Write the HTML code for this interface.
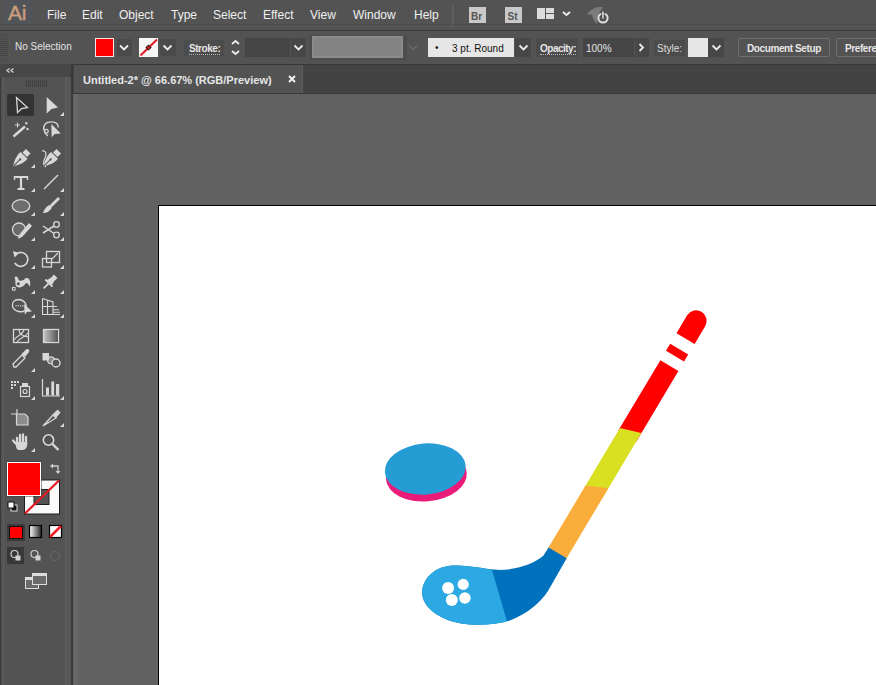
<!DOCTYPE html>
<html><head><meta charset="utf-8">
<style>
*{margin:0;padding:0;box-sizing:border-box}
html,body{width:876px;height:685px;overflow:hidden;background:#616161;font-family:"Liberation Sans",sans-serif;}
.a{position:absolute}
#menubar{left:0;top:0;width:876px;height:31px;background:#535353;border-bottom:1px solid #3a3a3a}
.mi{position:absolute;top:8px;font-size:12px;color:#f0f0f0;white-space:nowrap}
#ctrl{left:0;top:31px;width:876px;height:33px;background:#535353;}
.ct{position:absolute;font-size:10px;color:#e6e6e6;white-space:nowrap}
#tabbar{left:73px;top:64px;width:803px;height:30px;background:#434343;border-top:1px solid #383838;border-bottom:1px solid #393939}
#tab{left:74px;top:65px;width:229px;height:28px;background:#535353;border-right:1px solid #5c5c5c}
#tools{left:0;top:64px;width:72px;height:621px;background:#535353;}
#canvas{left:74px;top:94px;width:802px;height:591px;background:#616161}
#artboard{left:158px;top:205px;width:718px;height:480px;background:#fff;border-left:1px solid #000;border-top:1px solid #000}
svg{position:absolute;left:0;top:0}
</style></head><body>
<div id="menubar" class="a">
 <div class="a" style="left:5px;top:0;width:27px;height:24px;background:#51555a"></div>
 <div class="a" style="left:8px;top:1px;font-size:21px;color:#cc9e7c;letter-spacing:-0.3px;-webkit-text-stroke:0.4px #cc9e7c">Ai</div>
 <div class="a" style="left:0;top:24px;width:876px;height:1px;background:#4b4b4b"></div>
 <div class="a" style="left:0;top:26px;width:876px;height:1px;background:#5a5a5a"></div>
 <div class="mi" style="left:47px">File</div>
 <div class="mi" style="left:82px">Edit</div>
 <div class="mi" style="left:119px">Object</div>
 <div class="mi" style="left:171px">Type</div>
 <div class="mi" style="left:213px">Select</div>
 <div class="mi" style="left:263px">Effect</div>
 <div class="mi" style="left:310px">View</div>
 <div class="mi" style="left:353px">Window</div>
 <div class="mi" style="left:414px">Help</div>
</div>
<div id="ctrl" class="a"></div>
<div id="tools" class="a"></div>
<div id="tabbar" class="a"></div>
<div id="tab" class="a"></div>
<div id="canvas" class="a"></div>
<div id="artboard" class="a"></div>


<svg width="876" height="685" viewBox="0 0 876 685" style="left:0;top:0">
 <!-- toolbar frame -->
 <rect x="0" y="64" width="72" height="621" fill="#535353"/>
 <rect x="0" y="64" width="1" height="621" fill="#3a3a3a"/>
 <rect x="3" y="77" width="1" height="608" fill="#5c5c5c"/>
 <rect x="65" y="77" width="2" height="608" fill="#5c5c5c"/>
 <rect x="67" y="77" width="4" height="608" fill="#565656"/>
 <rect x="71" y="64" width="2" height="621" fill="#383838"/>
 <rect x="73" y="94" width="5" height="591" fill="#676767"/>
 <rect x="0" y="64" width="71" height="13" fill="#474747"/>
 <path d="M9.5 68.5 L7 70.5 L9.5 72.5 M13.5 68.5 L11 70.5 L13.5 72.5" fill="none" stroke="#cfcfcf" stroke-width="1.4"/>
 <g fill="#3e3e3e">
  <rect x="26" y="80" width="1" height="7"/><rect x="28" y="80" width="1" height="7"/><rect x="30" y="80" width="1" height="7"/><rect x="32" y="80" width="1" height="7"/><rect x="34" y="80" width="1" height="7"/><rect x="36" y="80" width="1" height="7"/><rect x="38" y="80" width="1" height="7"/><rect x="40" y="80" width="1" height="7"/><rect x="42" y="80" width="1" height="7"/><rect x="44" y="80" width="1" height="7"/><rect x="46" y="80" width="1" height="7"/>
 </g>
 <rect x="7" y="94" width="27" height="22" rx="2" fill="#333"/>
 <g fill="#d8d8d8">
  <!-- group triangles -->
  <path d="M35 188 L35 192 L31 192 Z"/><path d="M64 188 L64 192 L60 192 Z"/>
  <path d="M64 112 L64 116 L60 116 Z"/>
  <path d="M35 164 L35 168 L31 168 Z"/>
  <path d="M35 212 L35 216 L31 216 Z"/><path d="M64 212 L64 216 L60 216 Z"/>
  <path d="M35 237 L35 241 L31 241 Z"/><path d="M64 237 L64 241 L60 241 Z"/>
  <path d="M35 265 L35 269 L31 269 Z"/><path d="M64 265 L64 269 L60 269 Z"/>
  <path d="M35 290 L35 294 L31 294 Z"/><path d="M64 290 L64 294 L60 294 Z"/>
  <path d="M35 314 L35 318 L31 318 Z"/><path d="M64 314 L64 318 L60 318 Z"/>
  <path d="M35 368 L35 372 L31 372 Z"/>
  <path d="M35 396 L35 400 L31 400 Z"/><path d="M64 396 L64 400 L60 400 Z"/>
  <path d="M64 423 L64 427 L60 427 Z"/>
  <path d="M35 448 L35 452 L31 452 Z"/>
 </g>
 <g fill="none" stroke="#d8d8d8" stroke-width="1.3" stroke-linejoin="miter">
  <!-- selection -->
  <path d="M16.5 97.5 L17.5 112.5 L21.6 108.5 L27.5 107.5 Z"/>
  <!-- magic wand -->
  <path d="M13.5 136.5 L25 126.5" stroke-width="2.4"/>
  <path d="M17.5 122.5 V127.5 M15 125 H20" stroke-width="1"/>
  <!-- lasso -->
  <path d="M43.5 129.5 C43.5 124 47 121.8 51 121.8 C55 121.8 58.3 123.5 58.3 127.5" stroke-width="1.3"/>
  <path d="M43.8 128.5 C44.5 131 45 134 47.8 136" stroke-width="1.3"/>
  <circle cx="46.3" cy="131.2" r="1.9" stroke-width="1.2"/>
  <!-- curvature pen curve -->
  <path d="M42 151 C46 150 47 154 45 158 C43 162 43 165 46 167" stroke-width="1.2"/>
  <!-- line -->
  <path d="M44 189 L58 175" stroke-width="1.5"/>
  <!-- type -->
  <path d="M14.5 177 H27.5 M21 177 V189 M17.5 189 H24.5" stroke-width="2.2"/><path d="M14.5 176 V180 M27.5 176 V180" stroke-width="1.4"/>
  <!-- ellipse -->
  <ellipse cx="21" cy="206" rx="8.8" ry="6.3" stroke-width="1.3" fill="#6e6e6e"/>
  <!-- shaper -->
  <circle cx="19" cy="229.5" r="6.5" stroke-width="1.3" fill="#6a6a6a"/>
  <!-- scissors -->
  <circle cx="56.5" cy="224.5" r="2.8"/><circle cx="56.5" cy="235" r="2.8"/>
  <path d="M54 226 L43 233 M54 233.5 L43 226" stroke-width="1.5"/>
  <!-- rotate -->
  <path d="M16.5 253.8 A7 7 0 1 1 14.8 263" stroke-width="1.6"/>
  <!-- scale -->
  <rect x="46.5" y="251.5" width="13" height="11"/>
  <rect x="42.5" y="258.5" width="9" height="8.5"/>
  <path d="M52 259 L58 253" stroke-width="1.2"/>
  <!-- puppet -->
  <rect x="12.5" y="287.5" width="2.6" height="2.6" stroke-width="1"/>
  <!-- shape builder -->
  <path d="M19 299.5 C14 299.5 12 302.5 12.5 306 C13 310 18 312.5 23 311.5 C28 310.5 28 301 19 299.5 Z" stroke-width="1.3"/>
  <!-- perspective grid -->
  <path d="M42.5 298.5 V314.5 H60 M42.5 298.5 L53 302 V314.5 M42.5 306.5 H57 M47.5 300 V314.5 M53 309.8 H59 M53 312.3 H60" stroke-width="1.1"/>
  <!-- mesh -->
  <rect x="13.5" y="329.5" width="15" height="13"/>
  <path d="M14 340 C18 334 22 336 24 330 M17 342 C20 337 25 338 28 333 M19 330 C19 334 22 336 28 337" stroke-width="1.1"/>
  <!-- gradient -->
  <rect x="43.5" y="329.5" width="15" height="13"/>
  <!-- eyedropper -->
  <path d="M14 367 L13 364 L22 355 L25 358 L16 367 Z" stroke-width="1.3"/>
  <!-- blend -->
  <circle cx="51" cy="360.3" r="3.4" stroke-width="1.1" fill="#8a8a8a"/>
  <circle cx="56" cy="363" r="4" stroke-width="1.4" fill="#535353"/>
  <!-- symbol sprayer -->
  <rect x="20.5" y="386.5" width="9" height="10" stroke-width="1.2"/>
  <circle cx="25" cy="391.5" r="2" stroke-width="1.2"/>
  <!-- graph -->
  <path d="M42.5 379 V396 H60" stroke-width="1.2"/>
  <!-- artboard -->
  <path d="M16.5 414 V425 H28 V417 L25 414 Z" fill="#8c8c8c" stroke-width="1.2"/>
  <path d="M11 414 H17 M17 409 V414" stroke-width="1.2"/>
  <!-- slice -->
  <path d="M43 426 L53 415 L56 418 Z" stroke-width="1.3"/>
  <path d="M53 414.5 L57.5 410 L60 412.5 L56 417.5 Z" fill="#d8d8d8" stroke-width="1"/>
  <!-- zoom -->
  <circle cx="48.5" cy="440" r="5.2" stroke-width="1.6"/>
  <path d="M52.5 444 L58.5 450" stroke-width="2.4"/>
 </g>
 <g fill="#d8d8d8">
  <path d="M13 251 L19 253 L14.5 257.5 Z"/>
  <rect x="46" y="387.5" width="3" height="8"/><rect x="51.3" y="381.5" width="2.8" height="14"/><rect x="56" y="384" width="3.2" height="11.5"/>
  <!-- direct selection -->
  <path d="M46.7 97 L46.7 113.4 L51.5 109 L58 107.5 Z"/>
  <circle cx="26.3" cy="123.3" r="1.2"/><circle cx="27.5" cy="129" r="1.2"/>
  <path d="M51.3 124 L51.7 137.3 L54.7 134 L60.8 133.5 Z"/>
  <!-- pen -->
  <g transform="translate(20.5 159) rotate(45)"><rect x="-3.2" y="-11" width="6.4" height="5"/><path d="M-4.8 -5 H4.8 C5.5 0 3 6 0 10.5 C-3 6 -5.5 0 -4.8 -5 Z"/><path d="M0 10 V1" stroke="#535353" stroke-width="1"/><circle cx="0" cy="0.5" r="1.1" fill="#535353"/></g>
  <g transform="translate(51 159) rotate(45)"><rect x="-3.2" y="-11" width="6.4" height="5"/><path d="M-4.8 -5 H4.8 C5.5 0 3 6 0 10.5 C-3 6 -5.5 0 -4.8 -5 Z"/><path d="M0 10 V1" stroke="#535353" stroke-width="1"/><circle cx="0" cy="0.5" r="1.1" fill="#535353"/></g>
  <!-- brush -->
  <path d="M58 197 L60 199 L52 207 L50 205 Z"/>
  <path d="M50 205 L52 207 C50 212 46 213 43 213 C44 210 46 206 50 205 Z"/>
  <!-- shaper pencil -->
  <path d="M29 223 L32 226 L22 237 L18 239 L19 235 Z"/>
  <!-- pin -->
  <g transform="translate(50 282) rotate(45)"><rect x="-2.5" y="-8" width="5" height="3"/><path d="M-2 -5.5 H2 L3.5 1 H-3.5 Z"/><rect x="-5" y="0.5" width="10" height="2"/><path d="M-0.9 2 H0.9 V9 H-0.9 Z"/></g>
  <!-- shape builder arrow -->
  <path d="M24 304 L24.8 314.5 L27 312 L32 311.6 Z"/>
  <rect x="15.5" y="305.2" width="1.2" height="1.2"/><rect x="17.8" y="305.2" width="1.2" height="1.2"/><rect x="20.1" y="305.2" width="1.2" height="1.2"/><rect x="22.4" y="305.2" width="1.2" height="1.2"/>
  <path d="M14.5 277 C16.5 275.5 18 277 18.5 279.5 C19.5 281.5 22 281 24 279 C26 277.5 28.5 277.5 29.5 280 C30.5 282 30.3 284.5 30 286.5 C29 286 28.2 283.5 27 283 C25.5 282.5 24.5 285.5 22 286.8 C19.5 288 16.5 287.5 15.8 285.5 C15 283 16 281 14.5 277 Z"/>
  <circle cx="18.3" cy="283.7" r="1.5" fill="#535353"/>
  <circle cx="23.3" cy="279" r="1.2" fill="#535353"/>
  <!-- eyedropper top -->
  <path d="M21.5 354 L26 349.5 C28 348 30 350 29 352 L25 357 Z"/>
  <!-- blend squares -->
  <rect x="42.5" y="353" width="6.5" height="7.5"/>
  <!-- symbol sprayer dots -->
  <rect x="11" y="381" width="2" height="2"/><rect x="14" y="381" width="2" height="2"/><rect x="17" y="381" width="2" height="2"/>
  <rect x="11" y="384" width="2" height="2"/><rect x="14" y="384" width="2" height="2"/><rect x="11" y="387" width="2" height="2"/>
  <rect x="22" y="383" width="6" height="3"/>
  <!-- hand -->
  <path d="M17 438 V444 M20 435 V444 M23 434.5 V444 M26 437 V444" stroke="#d8d8d8" stroke-width="2.3" stroke-linecap="round"/>
  <path d="M13 440.5 L18 446" stroke="#d8d8d8" stroke-width="2.3" stroke-linecap="round"/>
  <path d="M16 442 H27.2 V445 C27 448 25 450 22 450 H19 C17 450 16 448 16 446 Z"/>
 </g>
 <!-- gradient fill -->
 <defs><linearGradient id="gtool" x1="0" x2="1"><stop offset="0" stop-color="#f0f0f0"/><stop offset="1" stop-color="#555"/></linearGradient>
 <linearGradient id="gmode" x1="0" x2="1"><stop offset="0" stop-color="#fff"/><stop offset="1" stop-color="#222"/></linearGradient></defs>
 <rect x="44" y="330" width="14" height="12" fill="url(#gtool)" opacity="0.7"/>

 <!-- fill / stroke -->
 <rect x="24" y="479.5" width="36" height="35" fill="#1e1e1e"/>
 <rect x="25" y="480.5" width="34" height="33" fill="#fafafa"/>
 <rect x="33.5" y="489" width="16" height="16" fill="#1e1e1e"/>
 <rect x="34.5" y="490" width="14" height="14" fill="#535353"/>
 <path d="M25 513.5 L59 480.5" stroke="#e31b23" stroke-width="2.2"/>
 <rect x="6.5" y="461.5" width="35" height="35" fill="#3a3a3a"/>
 <rect x="7" y="462" width="34" height="34" fill="#fff"/>
 <rect x="8" y="463" width="32" height="32" fill="#ff0000"/>
 <g fill="none" stroke="#cfcfcf" stroke-width="1.3">
  <path d="M52 466 H58 V472"/>
 </g>
 <g fill="#cfcfcf"><path d="M50 466 L53 463.5 V468.5 Z"/><path d="M58 474 L55.5 471 H60.5 Z"/></g>
 <rect x="11" y="505" width="6" height="6" fill="#111" stroke="#ddd" stroke-width="1"/>
 <rect x="8" y="502" width="6" height="6" fill="#fff" stroke="#111" stroke-width="1"/>

 <!-- color modes -->
 <rect x="7" y="524" width="18" height="17" fill="#3a3a3a"/>
 <rect x="9.5" y="526.5" width="13" height="12" fill="#ff0000" stroke="#111" stroke-width="1"/>
 <rect x="29.5" y="525.5" width="12" height="12" fill="url(#gmode)" stroke="#000" stroke-width="1.2"/>
 <rect x="49.5" y="525.5" width="12" height="12" fill="#fff" stroke="#000" stroke-width="1.2"/>
 <path d="M50 537 L61 526" stroke="#ee1c24" stroke-width="2.5"/>

 <!-- draw modes -->
 <rect x="7" y="547" width="17" height="17" fill="#383838"/>
 <g fill="none" stroke="#d0d0d0" stroke-width="1.2">
  <circle cx="14.5" cy="554" r="3.5"/>
  <circle cx="34.5" cy="554" r="3.5"/>
 </g>
 <rect x="15.5" y="555.5" width="5" height="5" fill="#d0d0d0"/>
 <rect x="35.5" y="555.5" width="5" height="5" fill="#d0d0d0"/>
 <circle cx="55" cy="556" r="4.5" fill="none" stroke="#666" stroke-width="1.2"/>

 <!-- screen mode -->
 <rect x="25.5" y="577.5" width="13" height="11" fill="#6a6a6a" stroke="#ddd" stroke-width="1"/>
 <rect x="32.5" y="573.5" width="14" height="11" fill="#6a6a6a" stroke="#ddd" stroke-width="1"/>
 <rect x="33" y="574" width="13" height="2" fill="#ddd"/>
 <rect x="26" y="578" width="6" height="2" fill="#ddd"/>
</svg>

<!-- control bar content -->
<svg width="10" height="66" style="left:0;top:0"><rect x="0" y="33" width="8" height="1" fill="#4c4c4c"/><rect x="0" y="35" width="8" height="1" fill="#4c4c4c"/><rect x="0" y="37" width="8" height="1" fill="#4c4c4c"/><rect x="0" y="39" width="8" height="1" fill="#4c4c4c"/><rect x="0" y="41" width="8" height="1" fill="#444"/><rect x="0" y="43" width="8" height="1" fill="#444"/><rect x="0" y="45" width="8" height="1" fill="#444"/><rect x="0" y="47" width="8" height="1" fill="#444"/><rect x="0" y="49" width="8" height="1" fill="#444"/><rect x="0" y="51" width="8" height="1" fill="#444"/><rect x="0" y="53" width="8" height="1" fill="#444"/><rect x="0" y="55" width="8" height="1" fill="#444"/><rect x="0" y="57" width="8" height="1" fill="#4c4c4c"/><rect x="0" y="59" width="8" height="1" fill="#4c4c4c"/><rect x="0" y="61" width="8" height="1" fill="#4c4c4c"/></svg>
<div class="ct" style="left:15px;top:41px;color:#e2e2e2">No Selection</div>
<div class="a" style="left:95px;top:38px;width:19px;height:19px;background:#f4e4e4;padding:1px"><div style="width:17px;height:17px;background:#f00"></div></div>
<div class="a" style="left:117px;top:39px;width:15px;height:17px;background:#4a4a4a"></div>
<div class="a" style="left:139px;top:38px;width:19px;height:19px;background:#f6f6f6"></div>
<div class="a" style="left:160px;top:39px;width:16px;height:17px;background:#4a4a4a"></div>
<div class="a" style="left:184px;top:40px;width:40px;height:16px;background:#4c4c4c"></div>
<div class="ct" style="left:189px;top:43px;font-weight:bold;border-bottom:1px dotted #bbb;line-height:11px;letter-spacing:-0.45px">Stroke:</div>
<div class="a" style="left:245px;top:38px;width:45px;height:19px;background:#454545"></div>
<div class="a" style="left:291px;top:38px;width:15px;height:19px;background:#474747"></div>
<div class="a" style="left:309px;top:35px;width:98px;height:25px;background:#4d4d4d"></div>
<div class="a" style="left:312px;top:36px;width:91px;height:22px;background:#838383;border:2px solid #8b8b8b"></div>
<div class="a" style="left:428px;top:38px;width:86px;height:19px;background:#e6e6e6"></div>
<div class="ct" style="left:435px;top:42px;color:#222">•</div>
<div class="ct" style="left:452px;top:43px;color:#111">3 pt. Round</div>
<div class="a" style="left:515px;top:38px;width:16px;height:19px;background:#474747"></div>
<div class="a" style="left:536px;top:38px;width:42px;height:19px;background:#4b4b4b"></div>
<div class="ct" style="left:540px;top:43px;font-weight:bold;border-bottom:1px dotted #bbb;line-height:11px;letter-spacing:-0.5px">Opacity:</div>
<div class="a" style="left:583px;top:38px;width:51px;height:19px;background:#454545"></div>
<div class="ct" style="left:586px;top:43px;">100%</div>
<div class="a" style="left:635px;top:38px;width:14px;height:19px;background:#474747"></div>
<div class="a" style="left:654px;top:40px;width:31px;height:16px;background:#4c4c4c"></div>
<div class="ct" style="left:657px;top:43px;color:#dcdcdc">Style:</div>
<div class="a" style="left:688px;top:38px;width:20px;height:19px;background:#e6e6e6"></div>
<div class="a" style="left:708px;top:38px;width:16px;height:19px;background:#474747"></div>
<div class="a" style="left:738px;top:38px;width:92px;height:19px;border:1px solid #6f6f6f;border-radius:2px"></div>
<div class="ct" style="left:747px;top:43px;font-weight:bold;letter-spacing:-0.4px">Document Setup</div>
<div class="a" style="left:836px;top:38px;width:50px;height:19px;border:1px solid #6f6f6f;border-radius:2px"></div>
<div class="ct" style="left:845px;top:43px;font-weight:bold;letter-spacing:-0.4px">Preferences</div>

<!-- tab -->
<div class="a" style="left:83px;top:74px;font-size:11px;font-weight:bold;color:#e6e6e6;white-space:nowrap">Untitled-2* @ 66.67% (RGB/Preview)</div>

<svg width="876" height="685" viewBox="0 0 876 685">
 <!-- chevrons -->
 <g fill="none" stroke="#ececec" stroke-width="1.8">
  <path d="M120 45.5 L124 49.5 L128 45.5"/>
  <path d="M163.5 45.5 L167.5 49.5 L171.5 45.5"/>
  <path d="M294.5 45.5 L298.5 49.5 L302.5 45.5"/>
  <path d="M519.5 45.5 L523.5 49.5 L527.5 45.5"/>
  <path d="M712.5 45.5 L716.5 49.5 L720.5 45.5"/>
  <path d="M639.5 44 L643 47.5 L639.5 51"/>
  <path d="M232 44 L235.5 41 L239 44 M232 51 L235.5 54 L239 51"/>
  <path d="M563 12 L566.5 15 L570 12" stroke-width="2"/>
 </g>
 <path d="M409 45.5 L413 49.5 L417 45.5" fill="none" stroke="#6a6a6a" stroke-width="1.5"/>
 <!-- stroke swatch diag -->
 <path d="M140.5 55.5 L157 39.5" stroke="#e0202a" stroke-width="2.2"/>
 <rect x="146.8" y="45.8" width="3.4" height="3.4" fill="#e0202a" stroke="#2a1010" stroke-width="1" transform="rotate(45 148.5 47.5)"/>
 <!-- menu right icons -->
 <rect x="452" y="5" width="2" height="20" fill="#5e5e5e"/>
 <rect x="469" y="7" width="17" height="16" fill="#c9c9c9"/>
 <text x="471" y="19.5" font-size="10" font-weight="bold" fill="#555" font-family="Liberation Sans">Br</text>
 <rect x="505" y="7" width="17" height="16" fill="#c9c9c9"/>
 <text x="507.5" y="19.5" font-size="10" font-weight="bold" fill="#555" font-family="Liberation Sans">St</text>
 <rect x="537" y="8" width="8" height="11" fill="#dcdcdc"/>
 <rect x="546" y="8" width="8" height="5" fill="#dcdcdc"/>
 <rect x="546" y="14" width="8" height="5" fill="#dcdcdc"/>
 <path d="M587 14 C590 10 594 8 598 7 L603 7 C601 10 599 13 598 16 L597 24 C595 22 593 19 592 15 Z" fill="#7c7c7c"/>
 <circle cx="603" cy="18" r="4.6" fill="none" stroke="#dedede" stroke-width="2"/>
 <path d="M603 11.5 V18.5" stroke="#3a3a3a" stroke-width="3.2"/>
 <path d="M603 11.5 V18.5" stroke="#e6e6e6" stroke-width="1.6"/>
 <!-- tab close -->
 <path d="M289 76 L295 82 M295 76 L289 82" stroke="#f0f0f0" stroke-width="2"/>

 <!-- artwork -->
 <g>
  <!-- puck -->
  <g transform="rotate(-5 425.5 472)">
   <ellipse cx="426" cy="476" rx="40.5" ry="25.5" fill="#eb1c79"/>
   <ellipse cx="425.5" cy="469" rx="40.5" ry="25.5" fill="#259cd3"/>
  </g>
  <!-- stick -->
  <path d="M687.3 315.1 A10.5 10.5 0 0 1 705.3 325.9 L694.6 343.9 L676.5 333.2 Z" fill="#ff0000"/>
  <polygon points="670.2,343.8 688.2,354.6 684.0,361.5 666.0,350.8" fill="#ff0000"/>
  <polygon points="660.4,360.2 678.4,371.0 636.4,441.4 618.3,430.6" fill="#ff0000"/>
  <polygon points="619.9,428.0 641.3,433.0 602.3,498.5 584.3,487.7" fill="#d9e021"/>
  <polygon points="585.5,485.6 608.4,488.2 565.6,559.9 547.6,549.1" fill="#fbad3b"/>
  <defs>
   <clipPath id="lb"><polygon points="400,540 491.7,540 491.7,569.1 507,621.2 510,640 400,640"/></clipPath>
  </defs>
  <path id="blade" d="M548.6 547.4 L543.5 555.5 C536 562.5 522 567.5 508 569.5 C495 571 485 568 470 566.5 C463 565.8 458 565.5 453 565.6 C436 566 422.5 578 422.2 592.5 C422 606 437 619 461 623.5 C477 626 494 625 510 620.5 C527 614 540 603 548 591 L566.7 558.2 Z" fill="#0071bc"/>
  <path clip-path="url(#lb)" d="M548.6 547.4 L543.5 555.5 C536 562.5 522 567.5 508 569.5 C495 571 485 568 470 566.5 C463 565.8 458 565.5 453 565.6 C436 566 422.5 578 422.2 592.5 C422 606 437 619 461 623.5 C477 626 494 625 510 620.5 C527 614 540 603 548 591 L566.7 558.2 Z" fill="#2ca8e2"/>
  <g fill="#fff">
   <circle cx="448.1" cy="588.1" r="6"/>
   <circle cx="463.2" cy="584.4" r="5.6"/>
   <circle cx="451.8" cy="600" r="6"/>
   <circle cx="464.9" cy="598" r="5.8"/>
  </g>
 </g>
</svg>
</body></html>
